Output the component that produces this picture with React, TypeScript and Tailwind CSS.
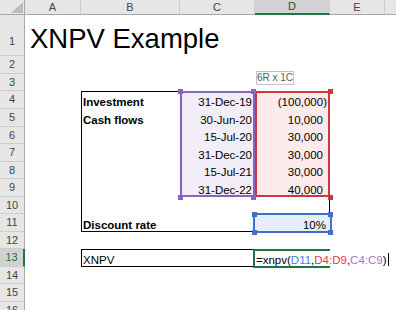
import React from "react";

type Flow = { row: string; date: string; amount: string; pad: string };

const flows: Flow[] = [
  { row: "row-start-5", date: "31-Dec-19", amount: "(100,000)", pad: "pr-[3px]" },
  { row: "row-start-6", date: "30-Jun-20", amount: "10,000", pad: "pr-[7px]" },
  { row: "row-start-7", date: "15-Jul-20", amount: "30,000", pad: "pr-[7px]" },
  { row: "row-start-8", date: "31-Dec-20", amount: "30,000", pad: "pr-[7px]" },
  { row: "row-start-9", date: "15-Jul-21", amount: "30,000", pad: "pr-[7px]" },
  { row: "row-start-10", date: "31-Dec-22", amount: "40,000", pad: "pr-[7px]" },
];

const colHeads = [
  { key: "A", label: "A", cls: "col-start-2 bg-[#e6e6e6] border-b border-b-[#a8a8a8] text-[#444]" },
  { key: "B", label: "B", cls: "col-start-3 bg-[#e6e6e6] border-b border-b-[#a8a8a8] text-[#444]" },
  { key: "C", label: "C", cls: "col-start-4 bg-[#e6e6e6] border-b border-b-[#a8a8a8] text-[#444]" },
  { key: "D", label: "D", cls: "col-start-5 bg-[#d2d2d2] border-b-2 border-b-[#217346] text-[#1f4f35]" },
  { key: "E", label: "E", cls: "col-start-6 bg-[#e6e6e6] border-b border-b-[#a8a8a8] text-[#444]" },
  { key: "F", label: "", cls: "col-start-7 bg-[#e6e6e6] border-b border-b-[#a8a8a8] text-[#444]" },
];

const rowHeads = [
  { label: "1", cls: "row-start-2 items-end pb-[8px] bg-[#e6e6e6] border-r border-r-[#a8a8a8] text-[#444]" },
  { label: "2", cls: "row-start-3 items-center bg-[#e6e6e6] border-r border-r-[#a8a8a8] text-[#444]" },
  { label: "3", cls: "row-start-4 items-center bg-[#e6e6e6] border-r border-r-[#a8a8a8] text-[#444]" },
  { label: "4", cls: "row-start-5 items-center bg-[#e6e6e6] border-r border-r-[#a8a8a8] text-[#444]" },
  { label: "5", cls: "row-start-6 items-center bg-[#e6e6e6] border-r border-r-[#a8a8a8] text-[#444]" },
  { label: "6", cls: "row-start-7 items-center bg-[#e6e6e6] border-r border-r-[#a8a8a8] text-[#444]" },
  { label: "7", cls: "row-start-8 items-center bg-[#e6e6e6] border-r border-r-[#a8a8a8] text-[#444]" },
  { label: "8", cls: "row-start-9 items-center bg-[#e6e6e6] border-r border-r-[#a8a8a8] text-[#444]" },
  { label: "9", cls: "row-start-10 items-center bg-[#e6e6e6] border-r border-r-[#a8a8a8] text-[#444]" },
  { label: "10", cls: "row-start-11 items-center bg-[#e6e6e6] border-r border-r-[#a8a8a8] text-[#444]" },
  { label: "11", cls: "row-start-12 items-center bg-[#e6e6e6] border-r border-r-[#a8a8a8] text-[#444]" },
  { label: "12", cls: "row-start-13 items-center bg-[#e6e6e6] border-r border-r-[#a8a8a8] text-[#444]" },
  { label: "13", cls: "row-start-14 items-center bg-[#d2d2d2] border-r-2 border-r-[#217346] text-[#217346]" },
  { label: "14", cls: "row-start-15 items-center bg-[#e6e6e6] border-r border-r-[#a8a8a8] text-[#444]" },
  { label: "15", cls: "row-start-16 items-center bg-[#e6e6e6] border-r border-r-[#a8a8a8] text-[#444]" },
  { label: "16", cls: "row-start-17 items-center bg-[#e6e6e6] border-r border-r-[#a8a8a8] text-[#444]" },
];

// corner grips of the highlighted reference ranges
const grips = [
  "left-[178px] top-[89px] bg-[#8563c3]",
  "left-[251px] top-[89px] bg-[#8563c3]",
  "left-[178px] top-[195px] bg-[#8563c3]",
  "left-[251px] top-[195px] bg-[#8563c3]",
  "left-[328px] top-[89px] bg-[#c8373f]",
  "left-[328px] top-[195px] bg-[#c8373f]",
  "left-[252px] top-[212px] bg-[#3d6fcb]",
  "left-[328px] top-[212px] bg-[#3d6fcb]",
  "left-[252px] top-[230px] bg-[#3d6fcb]",
  "left-[328px] top-[230px] bg-[#3d6fcb]",
];

export default function App() {
  return (
    <div className="relative w-[396px] h-[310px] overflow-hidden bg-white [font-family:'Liberation_Sans',Arial,sans-serif]">
      <div className="grid w-max grid-cols-[25px_56px_99px_75px_75px_55px_60px] grid-rows-[15px_41px_18px_17px_18px_18px_17px_18px_17px_18px_17px_18px_17px_18px_17px_18px_18px] text-[11.5px] text-black">
        {/* select-all corner */}
        <div className="col-start-1 row-start-1 flex items-end justify-end bg-[#e6e6e6] border-r border-b border-r-[#a8a8a8] border-b-[#a8a8a8] pr-[1px] pb-[1px]">
          <svg width="12" height="11" viewBox="0 0 12 11">
            <polygon points="12,0 12,11 0,11" fill="#bdbdbd" />
          </svg>
        </div>

        {colHeads.map((c) => (
          <div
            key={c.key}
            className={`row-start-1 flex items-center justify-center border-r border-r-[#cdcdcd] text-[11px] leading-none ${c.cls}`}
          >
            {c.label}
          </div>
        ))}

        {rowHeads.map((r) => (
          <div
            key={r.label}
            className={`col-start-1 flex justify-center border-b border-b-[#cdcdcd] text-[11px] leading-none ${r.cls}`}
          >
            {r.label}
          </div>
        ))}

        {/* title */}
        <div className="col-start-2 col-span-5 row-start-2 pl-[5px] pt-[9px] text-[27.5px] leading-[30px] whitespace-nowrap">
          XNPV Example
        </div>

        {/* outlined blocks */}
        <div className="col-start-3 col-span-3 row-start-5 row-span-8 border border-black" />
        <div className="col-start-3 col-span-3 row-start-14 border border-black" />

        {/* reference ranges of the formula being edited */}
        <div className="col-start-4 row-start-5 row-span-6 border-2 border-[#8563c3] bg-[#f1eef8]" />
        <div className="col-start-5 row-start-5 row-span-6 border-2 border-[#c8373f] bg-[#fcebea]" />
        <div className="col-start-5 row-start-12 mx-[-2px] my-[-1px] border-2 border-[#3d6fcb] bg-[#e8eef9]" />

        {/* active cell in edit mode */}
        <div className="col-start-5 row-start-14 ml-[-2px] mb-[-1px] border-2 border-r-0 border-[#217346] bg-white" />

        {/* labels */}
        <div className="col-start-3 row-start-5 flex items-end pl-[2px] leading-[14px] font-bold whitespace-nowrap">
          Investment
        </div>
        <div className="col-start-3 row-start-6 flex items-end pl-[2px] leading-[14px] font-bold whitespace-nowrap">
          Cash flows
        </div>
        <div className="col-start-3 row-start-12 flex items-end pl-[2px] leading-[14px] font-bold whitespace-nowrap">
          Discount rate
        </div>
        <div className="col-start-3 row-start-14 flex items-end pl-[2px] leading-[14px] whitespace-nowrap">
          XNPV
        </div>

        {flows.map((f) => (
          <React.Fragment key={f.date}>
            <div className={`col-start-4 flex items-end justify-end pr-[3px] leading-[14px] whitespace-nowrap ${f.row}`}>
              {f.date}
            </div>
            <div className={`col-start-5 flex items-end justify-end leading-[14px] whitespace-nowrap ${f.row} ${f.pad}`}>
              {f.amount}
            </div>
          </React.Fragment>
        ))}

        <div className="col-start-5 row-start-12 flex items-end justify-end pr-[4px] leading-[14px] whitespace-nowrap">
          10%
        </div>

        {/* formula text */}
        <div className="col-start-5 col-span-3 row-start-14 flex items-end pl-[1px] leading-[14px] whitespace-nowrap">
          <span>=xnpv(</span>
          <span className="text-[#4a7fdc]">D11</span>
          <span>,</span>
          <span className="text-[#e03a3a]">D4:D9</span>
          <span>,</span>
          <span className="text-[#9577d2]">C4:C9</span>
          <span>)</span>
          <span className="ml-[1px] mb-[1px] inline-block h-[13px] w-px bg-black" />
        </div>
      </div>

      {grips.map((g) => (
        <div key={g} className={`absolute h-[5px] w-[5px] ${g}`} />
      ))}

      {/* selection size tip */}
      <div className="absolute left-[256px] top-[71px] flex h-[14px] w-[38px] items-center justify-center border border-[#c3c3c3] bg-white text-[10px] leading-none text-[#595959] whitespace-nowrap">
        6R x 1C
      </div>
    </div>
  );
}
